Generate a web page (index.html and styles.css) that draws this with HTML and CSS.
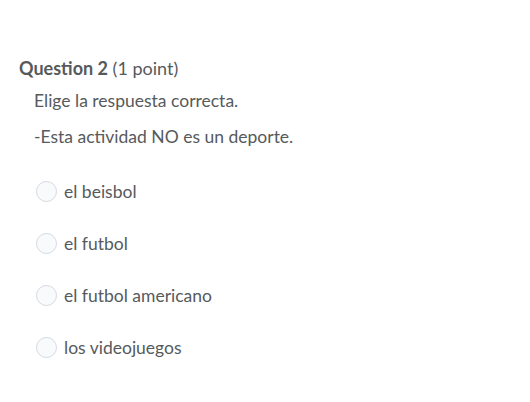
FILE: index.html
```html
<!DOCTYPE html>
<html>
<head>
<meta charset="utf-8">
<link rel="stylesheet" href="styles.css">
</head>
<body>
<div class="question">
  <h2 class="q-title"><strong>Question 2</strong> (1 point)</h2>
  <div class="q-body">
    <p class="q-text">Elige la respuesta correcta.</p>
    <p class="q-text">-Esta actividad NO es un deporte.</p>
  </div>
  <ul class="options">
    <li class="option"><span class="radio"></span><span class="label">el beisbol</span></li>
    <li class="option"><span class="radio"></span><span class="label">el futbol</span></li>
    <li class="option"><span class="radio"></span><span class="label">el futbol americano</span></li>
    <li class="option"><span class="radio"></span><span class="label">los videojuegos</span></li>
  </ul>
</div>
</body>
</html>
```
FILE: styles.css
```css
html, body {
  margin: 0;
  padding: 0;
  background: #ffffff;
}
body {
  font-family: Lato, "Liberation Sans", sans-serif;
  color: #565a5c;
  width: 530px;
  height: 402px;
  overflow: hidden;
}
.question {
  padding: 56px 0 0 19px;
}
.q-title {
  margin: 0;
  font-size: 18px;
  font-weight: 400;
  line-height: 24px;
  color: #565a5c;
}
.q-title strong {
  font-weight: 700;
}
.q-body {
  padding-left: 15px;
  padding-top: 9px;
  display: flex;
  flex-direction: column;
  gap: 12px;
}
.q-text {
  margin: 0;
  font-size: 17.5px;
  line-height: 24px;
}
.options {
  list-style: none;
  margin: 30px 0 0 0;
  padding: 0 0 0 17px;
  display: flex;
  flex-direction: column;
  gap: 28px;
}
.option {
  display: flex;
  align-items: center;
  gap: 7px;
  height: 24px;
  font-size: 17.5px;
}
.radio {
  width: 21px;
  height: 21px;
  border-radius: 50%;
  border: 1px solid #d3d9e3;
  background: #f9fafb;
  box-sizing: border-box;
  flex: none;
}
```
